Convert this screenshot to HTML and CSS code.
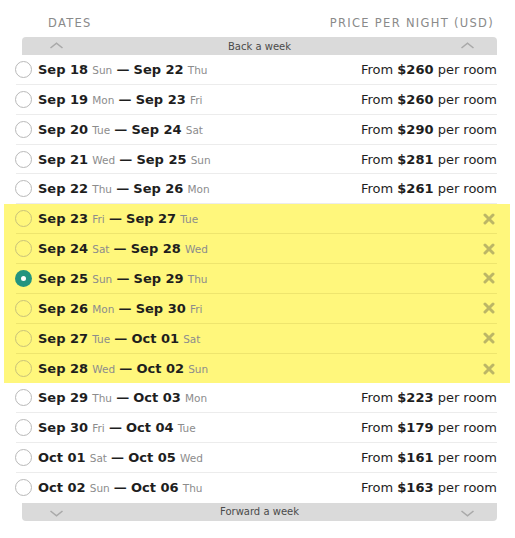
FILE: index.html
```html
<!DOCTYPE html>
<html>
<head>
<meta charset="utf-8">
<link rel="stylesheet" href="styles.css">
</head>
<body>
<div class="page">
  <div class="head">
    <span>DATES</span>
    <span>PRICE PER NIGHT (USD)</span>
  </div>
  <div class="bar bar-top">
    <svg class="chev" viewBox="0 0 14 7"><path d="M1 6 L7 1.2 L13 6" /></svg>
    <span class="bar-label">Back a week</span>
    <svg class="chev chev-r" viewBox="0 0 14 7"><path d="M1 6 L7 1.2 L13 6" /></svg>
  </div>

  <div class="row"><span class="radio"></span><span class="dates"><b>Sep 18</b> <i>Sun</i> <b>—</b> <b>Sep 22</b> <i>Thu</i></span><span class="price">From <b>$260</b> per room</span></div>
  <div class="row"><span class="radio"></span><span class="dates"><b>Sep 19</b> <i>Mon</i> <b>—</b> <b>Sep 23</b> <i>Fri</i></span><span class="price">From <b>$260</b> per room</span></div>
  <div class="row"><span class="radio"></span><span class="dates"><b>Sep 20</b> <i>Tue</i> <b>—</b> <b>Sep 24</b> <i>Sat</i></span><span class="price">From <b>$290</b> per room</span></div>
  <div class="row"><span class="radio"></span><span class="dates"><b>Sep 21</b> <i>Wed</i> <b>—</b> <b>Sep 25</b> <i>Sun</i></span><span class="price">From <b>$281</b> per room</span></div>
  <div class="row"><span class="radio"></span><span class="dates"><b>Sep 22</b> <i>Thu</i> <b>—</b> <b>Sep 26</b> <i>Mon</i></span><span class="price">From <b>$261</b> per room</span></div>

  <div class="unavailable">
    <div class="row"><span class="radio"></span><span class="dates"><b>Sep 23</b> <i>Fri</i> <b>—</b> <b>Sep 27</b> <i>Tue</i></span><svg class="x" viewBox="0 0 12 12"><path d="M2 2 L10 10 M10 2 L2 10"/></svg></div>
    <div class="row"><span class="radio"></span><span class="dates"><b>Sep 24</b> <i>Sat</i> <b>—</b> <b>Sep 28</b> <i>Wed</i></span><svg class="x" viewBox="0 0 12 12"><path d="M2 2 L10 10 M10 2 L2 10"/></svg></div>
    <div class="row"><span class="radio radio-on"></span><span class="dates"><b>Sep 25</b> <i>Sun</i> <b>—</b> <b>Sep 29</b> <i>Thu</i></span><svg class="x" viewBox="0 0 12 12"><path d="M2 2 L10 10 M10 2 L2 10"/></svg></div>
    <div class="row"><span class="radio"></span><span class="dates"><b>Sep 26</b> <i>Mon</i> <b>—</b> <b>Sep 30</b> <i>Fri</i></span><svg class="x" viewBox="0 0 12 12"><path d="M2 2 L10 10 M10 2 L2 10"/></svg></div>
    <div class="row"><span class="radio"></span><span class="dates"><b>Sep 27</b> <i>Tue</i> <b>—</b> <b>Oct 01</b> <i>Sat</i></span><svg class="x" viewBox="0 0 12 12"><path d="M2 2 L10 10 M10 2 L2 10"/></svg></div>
    <div class="row"><span class="radio"></span><span class="dates"><b>Sep 28</b> <i>Wed</i> <b>—</b> <b>Oct 02</b> <i>Sun</i></span><svg class="x" viewBox="0 0 12 12"><path d="M2 2 L10 10 M10 2 L2 10"/></svg></div>
  </div>

  <div class="row"><span class="radio"></span><span class="dates"><b>Sep 29</b> <i>Thu</i> <b>—</b> <b>Oct 03</b> <i>Mon</i></span><span class="price">From <b>$223</b> per room</span></div>
  <div class="row"><span class="radio"></span><span class="dates"><b>Sep 30</b> <i>Fri</i> <b>—</b> <b>Oct 04</b> <i>Tue</i></span><span class="price">From <b>$179</b> per room</span></div>
  <div class="row"><span class="radio"></span><span class="dates"><b>Oct 01</b> <i>Sat</i> <b>—</b> <b>Oct 05</b> <i>Wed</i></span><span class="price">From <b>$161</b> per room</span></div>
  <div class="row row-last"><span class="radio"></span><span class="dates"><b>Oct 02</b> <i>Sun</i> <b>—</b> <b>Oct 06</b> <i>Thu</i></span><span class="price">From <b>$163</b> per room</span></div>

  <div class="bar bar-bottom">
    <svg class="chev" viewBox="0 0 14 7"><path d="M1 1 L7 5.8 L13 1" /></svg>
    <span class="bar-label">Forward a week</span>
    <svg class="chev chev-r" viewBox="0 0 14 7"><path d="M1 1 L7 5.8 L13 1" /></svg>
  </div>
</div>
</body>
</html>
```
FILE: styles.css
```css
* { box-sizing: border-box; }
html, body { margin: 0; padding: 0; background: #fff; }
body {
  font-family: "DejaVu Sans", Verdana, sans-serif;
  color: #1e1e1e;
}
.page {
  width: 515px;
  padding: 0 18px 0 16px;
}
.head {
  display: flex;
  justify-content: space-between;
  height: 37px;
  padding: 16px 3px 0 32px;
  font-size: 11.5px;
  letter-spacing: 1.3px;
  color: #8a8a8a;
}
.bar {
  margin-left: 6px;
  height: 18px;
  background: #dadada;
  display: grid;
  grid-template-columns: 1fr auto 1fr;
  align-items: center;
  font-size: 10px;
  color: #4a4a4a;
}
.bar-top { border-radius: 4px 4px 0 0; }
.bar-bottom { border-radius: 0 0 4px 4px; }
.chev {
  width: 15px;
  height: 7px;
  margin-left: 27px;
  fill: none;
  stroke: #a9a9a9;
  stroke-width: 1.6;
}
.bar-top .chev { margin-top: -2px; }
.bar-bottom .chev { margin-top: 3px; }
.chev-r { justify-self: end; margin-left: 0; margin-right: 22px; }
.row {
  display: flex;
  align-items: center;
  height: 29.86px;
  border-bottom: 1px solid #ececec;
  font-size: 13px;
}
.row-last { border-bottom: none; }
.radio {
  width: 17px;
  height: 17px;
  margin-left: -1px;
  margin-right: 6px;
  border-radius: 50%;
  border: 1px solid #b9b9b9;
  background: #fff;
  flex: none;
}
.dates { flex: 1; white-space: nowrap; }
.dates b { font-weight: bold; }
.dates i { font-style: normal; font-size: 10.5px; color: #8c8c8c; }
.price { white-space: nowrap; }
.price b { font-weight: bold; }
.unavailable {
  margin: 0 -13px 0 -12px;
  padding: 0 13px 0 12px;
  background: #fff77c;
}
.unavailable .row { border-bottom-color: #eee56e; }
.unavailable .row:last-child { border-bottom: none; }
.unavailable .radio {
  background: transparent;
  border-color: #c9c27a;
}
.unavailable .radio-on {
  background: #23947f;
  border: none;
  position: relative;
}
.radio-on::after {
  content: "";
  position: absolute;
  left: 6px;
  top: 6px;
  width: 5px;
  height: 5px;
  border-radius: 50%;
  background: #fff;
}
.x {
  width: 12px;
  height: 12px;
  margin-right: 2px;
  fill: none;
  stroke: #bcb666;
  stroke-width: 3;
  stroke-linecap: round;
}
```
